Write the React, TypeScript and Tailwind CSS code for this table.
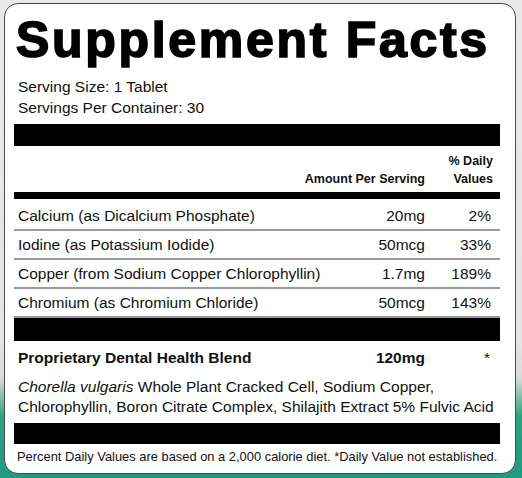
import React from "react";

const rows = [
  { name: "Calcium (as Dicalcium Phosphate)", amt: "20mg", dv: "2%" },
  { name: "Iodine (as Potassium Iodide)", amt: "50mcg", dv: "33%" },
  { name: "Copper (from Sodium Copper Chlorophyllin)", amt: "1.7mg", dv: "189%" },
  { name: "Chromium (as Chromium Chloride)", amt: "50mcg", dv: "143%" },
];

export default function App() {
  return (
    <div
      className="w-[522px] h-[478px] overflow-hidden bg-[linear-gradient(to_bottom,#e9e9e9_0%,#e4e4e4_72%,#d8dcd9_79%,#2fa283_87%,#1f9a7e_100%)] pt-[3px] pl-[4px]"
      style={{ fontFamily: '"Liberation Sans", Arial, sans-serif' }}
    >
      <div className="w-[512px] h-[471px] bg-white border border-[#4a4a4a] rounded-[14px] pl-[9px] pr-[15px] text-[#111] flex flex-col">
        <div className="pt-[11px] h-[64px] text-[50px] leading-[50px] font-bold tracking-[2.7px] whitespace-nowrap [-webkit-text-stroke:1.7px_#000] text-black pl-[2px]">
          Supplement Facts
        </div>
        <div className="mt-[8px] pl-[4px] text-[15.5px] leading-[21px]">
          <div>Serving Size: 1 Tablet</div>
          <div>Servings Per Container: 30</div>
        </div>
        <div className="mt-[6px] h-[22px] bg-black" />
        <div className="mt-[6px] flex items-end text-[12.5px] leading-[18px] font-bold">
          <div className="flex-1" />
          <div className="text-right">Amount Per Serving</div>
          <div className="w-[75px] text-right pr-[7px]">
            <div>% Daily</div>
            <div>Values</div>
          </div>
        </div>
        <div className="mt-[4px] h-[7px] bg-black" />
        <div className="mt-[3px] flex flex-col text-[15.5px]">
          {rows.map((r) => (
            <div key={r.name} className="h-[29px] flex items-center border-b-2 border-[#9a9a9a] pl-[4px]">
              <div className="flex-1 whitespace-nowrap">{r.name}</div>
              <div className="text-right">{r.amt}</div>
              <div className="w-[75px] text-right pr-[9px]">{r.dv}</div>
            </div>
          ))}
        </div>
        <div className="h-[23px] bg-black" />
        <div className="mt-[7px] h-[20px] flex items-center pl-[4px] text-[15.5px] font-bold">
          <div className="flex-1 whitespace-nowrap">Proprietary Dental Health Blend</div>
          <div className="text-right">120mg</div>
          <div className="w-[75px] text-right pr-[10px] font-normal">*</div>
        </div>
        <div className="mt-[9px] pl-[4px] text-[15.5px] leading-[19.5px]">
          <div>
            <span className="italic">Chorella vulgaris</span> Whole Plant Cracked Cell, Sodium Copper,
          </div>
          <div>Chlorophyllin, Boron Citrate Complex, Shilajith Extract 5% Fulvic Acid</div>
        </div>
        <div className="mt-[7px] h-[21px] bg-black" />
        <div className="mt-[5px] pl-[3px] text-[12.9px] leading-[16px] whitespace-nowrap">
          Percent Daily Values are based on a 2,000 calorie diet. *Daily Value not established.
        </div>
      </div>
    </div>
  );
}
